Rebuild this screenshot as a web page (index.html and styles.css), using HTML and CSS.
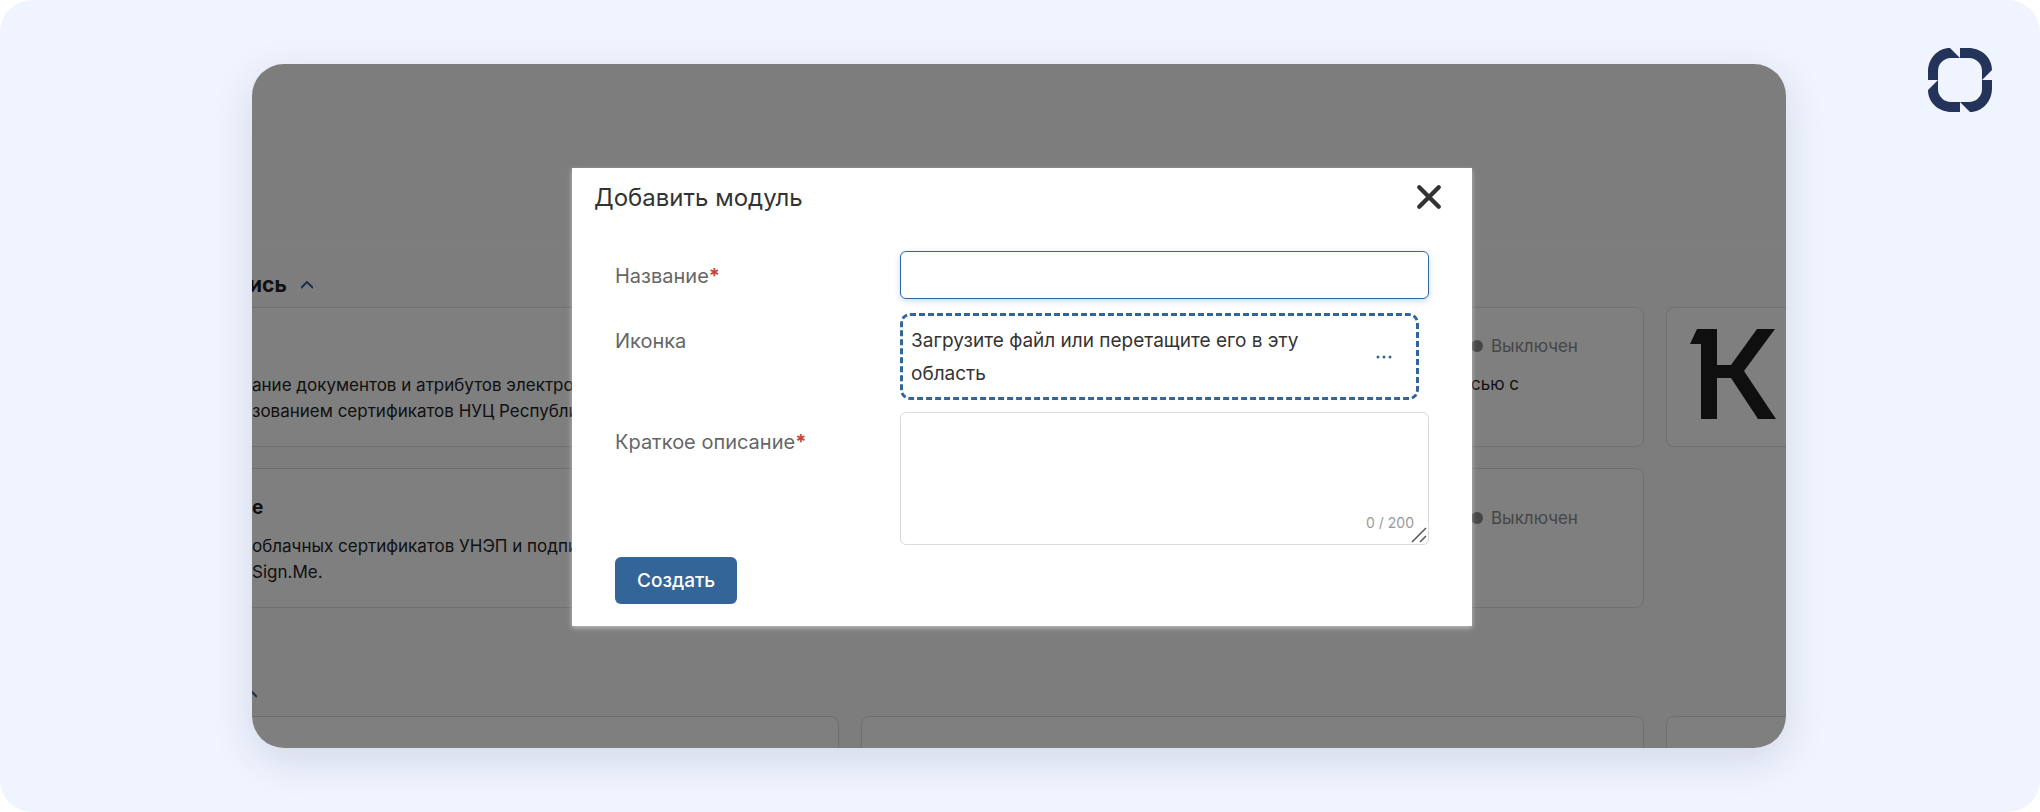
FILE: index.html
```
<!DOCTYPE html>
<html lang="ru">
<head>
    <meta charset="UTF-8">
    <meta name="viewport" content="width=device-width, initial-scale=1.0">
    <title>Добавить модуль</title>
    <link rel="stylesheet" href="styles.css">
</head>
<body>
    <div class="canvas">
        <svg class="brand" viewBox="0 0 64 64" aria-hidden="true">
            <path id="petal" d="M0 32V24C0 10 10 0 22 0L32 10H23A13 13 0 0 0 10 23V32Z"/>
            <use href="#petal" transform="rotate(90 32 32)"/>
            <use href="#petal" transform="rotate(180 32 32)"/>
            <use href="#petal" transform="rotate(270 32 32)"/>
        </svg>

        <div class="window">
            <main class="page">
                <header class="page-header"></header>

                <section class="section">
                    <h2 class="section-title">ись
                        <svg class="chevron" viewBox="0 0 12 8"><path d="M0 7l6-6 6 6"/></svg>
                    </h2>
                    <div class="cards">
                        <article class="card card-cut">
                            <p class="card-text card-text-low">ание документов и атрибутов электрон<br>зованием сертификатов НУЦ Республи</p>
                        </article>
                        <article class="card card-end">
                            <div class="card-side">
                                <p class="status"><span class="dot"></span>Выключен</p>
                                <p class="card-text">сью с</p>
                            </div>
                        </article>
                        <article class="card card-logo">
                            <svg class="module-logo" viewBox="0 0 86 90" aria-hidden="true">
                                <path d="M0 15L7 0H27V36H41L67 0H85L54 42L86 90H68L41 49H27V90H11V15Z"/>
                            </svg>
                        </article>
                        <article class="card card-cut">
                            <h3 class="card-title">е</h3>
                            <p class="card-text">облачных сертификатов УНЭП и подпи<br>Sign.Me.</p>
                        </article>
                        <article class="card card-end">
                            <div class="card-side card-side-low">
                                <p class="status"><span class="dot"></span>Выключен</p>
                            </div>
                        </article>
                    </div>
                </section>

                <section class="section section-next">
                    <h2 class="section-title section-title-cut">
                        <svg class="chevron" viewBox="0 0 12 8"><path d="M0 7l6-6 6 6"/></svg>
                    </h2>
                    <div class="cards">
                        <article class="card"></article>
                        <article class="card"></article>
                        <article class="card"></article>
                    </div>
                </section>
            </main>

            <div class="overlay">
                <div class="dialog" role="dialog" aria-labelledby="dialogTitle">
                    <div class="dialog-header">
                        <h1 class="dialog-title" id="dialogTitle">Добавить модуль</h1>
                        <button class="close" type="button" aria-label="Закрыть">
                            <svg viewBox="0 0 24 24"><path d="M3 3l18 18M21 3L3 21"/></svg>
                        </button>
                    </div>
                    <form class="form">
                        <label class="label" for="name">Название<span class="required">*</span></label>
                        <input class="input" type="text" id="name" name="name" required>

                        <label class="label label-top" for="icon">Иконка</label>
                        <div class="dropzone">
                            <span>Загрузите файл или перетащите его в эту область</span>
                            <button class="more" type="button" id="icon" aria-label="Выбрать файл">
                                <svg viewBox="0 0 16 4"><circle cx="2" cy="2" r="1.5"/><circle cx="8" cy="2" r="1.5"/><circle cx="14" cy="2" r="1.5"/></svg>
                            </button>
                        </div>

                        <label class="label label-top" for="description">Краткое описание<span class="required">*</span></label>
                        <div class="area">
                            <textarea class="input textarea" id="description" name="description" maxlength="200" required></textarea>
                            <span class="counter">0 / 200</span>
                            <svg class="grip" viewBox="0 0 16 16" aria-hidden="true"><path d="M1 15L15 1M9 15l6-6"/></svg>
                        </div>

                        <button class="submit" type="submit">Создать</button>
                    </form>
                </div>
            </div>
        </div>
    </div>
</body>
</html>
```
FILE: styles.css
```
* {
    box-sizing: border-box;
}
body {
    margin: 0;
    background: #fff;
    color: #333;
    font-family: Inter, "Liberation Sans", sans-serif;
}
h1, h2, h3, p {
    margin: 0;
}
.canvas {
    position: relative;
    display: flex;
    min-height: 100vh;
    padding: 64px 254px 64px 252px;
    border-radius: 32px;
    background: #eff4ff;
}
.brand {
    position: absolute;
    top: 48px;
    right: 48px;
    width: 64px;
    height: 64px;
    fill: #233359;
}
.window {
    position: relative;
    flex: 1;
    min-width: 0;
    overflow: hidden;
    border-radius: 32px;
    background: #fbfbfb;
    box-shadow: 0 12px 40px rgba(50, 50, 80, 0.14);
}

/* Страница под диалогом */
.page {
    height: 684px;
    overflow: hidden;
}
.page-header {
    height: 180px;
    border-bottom: 1px solid #fff;
}
.section-title {
    display: flex;
    align-items: center;
    gap: 14px;
    height: 63px;
    padding-top: 18px;
    margin-left: -3px;
    color: #222;
    font-size: 21px;
    line-height: 28px;
}
.section-title-cut {
    margin-left: -7px;
}
.section-next {
    margin-top: 45px;
}
.chevron {
    width: 12px;
    height: 8px;
    fill: none;
    stroke: #336598;
    stroke-width: 2;
}
.cards {
    display: grid;
    grid-template-columns: repeat(3, 783px);
    grid-auto-rows: 140px;
    gap: 21px 22px;
    margin-left: -196px;
}
.card {
    border: 1px solid #dedede;
    border-radius: 8px;
    background: #fff;
}
.card-cut {
    padding: 26px 0 0 195px;
    overflow: hidden;
    white-space: nowrap;
}
.card-end {
    display: flex;
    justify-content: flex-end;
}
.card-side {
    width: 172px;
    padding-top: 25px;
}
.card-side-low {
    padding-top: 36px;
}
.card-title {
    font-size: 19px;
    line-height: 26px;
    color: #222;
}
.card-text {
    margin-top: 12px;
    color: #222;
    font-size: 17px;
    line-height: 26px;
}
.card-text-low {
    margin-top: 38px;
}
.status {
    display: flex;
    align-items: center;
    gap: 8px;
    color: #8c8c8c;
    font-size: 17px;
    line-height: 26px;
}
.dot {
    width: 12px;
    height: 12px;
    border-radius: 50%;
    background: #8c8c8c;
}
.card-logo {
    padding: 21px 23px;
}
.module-logo {
    width: 86px;
    height: 90px;
    fill: #1e1e1e;
}

/* Диалог */
.overlay {
    position: absolute;
    inset: 0;
    padding: 104px 0 0 6px;
    background: rgba(0, 0, 0, 0.5);
}
.dialog {
    width: 900px;
    max-width: 100%;
    margin: 0 auto;
    background: #fff;
    box-shadow: 0 2px 5px rgba(255, 255, 255, 0.5);
}
.dialog-header {
    display: flex;
    align-items: center;
    justify-content: space-between;
    height: 58px;
    padding: 0 30px 0 22px;
}
.dialog-title {
    font-size: 24px;
    font-weight: 400;
}
button {
    padding: 0;
    border: none;
    background: none;
    font-family: inherit;
    cursor: pointer;
}
.close svg {
    display: block;
    width: 26px;
    height: 26px;
    fill: none;
    stroke: #333;
    stroke-width: 4;
    stroke-linecap: round;
}
.form {
    display: grid;
    grid-template-columns: 285px 1fr;
    row-gap: 12px;
    align-items: start;
    padding: 25px 43px 22px;
}
.label {
    padding-top: 12px;
    color: #666;
    font-size: 20px;
    line-height: 26px;
}
.label-top {
    padding-top: 17px;
}
.required {
    color: #c9453b;
    font-weight: 700;
}
.input {
    display: block;
    width: 100%;
    height: 48px;
    padding: 0 12px;
    border: 1px solid #336598;
    border-radius: 6px;
    outline: none;
    background: #fff;
    box-shadow: 0 2px 6px rgba(60, 140, 230, 0.3);
    font-family: inherit;
    font-size: 20px;
}
.textarea {
    height: 133px;
    padding: 12px;
    border-color: #d9d9d9;
    box-shadow: none;
    resize: none;
}
.dropzone {
    display: flex;
    align-items: center;
    justify-content: space-between;
    margin: 2px 10px 0 0;
    min-height: 87px;
    padding: 0 24px 0 8px;
    border: 3px dashed #336598;
    border-radius: 10px;
    font-size: 19px;
    line-height: 33px;
}
.dropzone span {
    max-width: 420px;
}
.more svg {
    display: block;
    width: 16px;
    height: 4px;
    fill: #336598;
}
.area {
    position: relative;
}
.counter {
    position: absolute;
    right: 15px;
    bottom: 12px;
    color: #999;
    font-size: 14px;
    line-height: 20px;
}
.grip {
    position: absolute;
    right: 2px;
    bottom: 2px;
    width: 16px;
    height: 16px;
    fill: none;
    stroke: #555;
    stroke-width: 1.5;
}
.submit {
    justify-self: start;
    height: 47px;
    padding: 0 22px;
    border-radius: 6px;
    background: #336598;
    color: #fff;
    font-size: 19px;
    font-weight: 500;
}
```
